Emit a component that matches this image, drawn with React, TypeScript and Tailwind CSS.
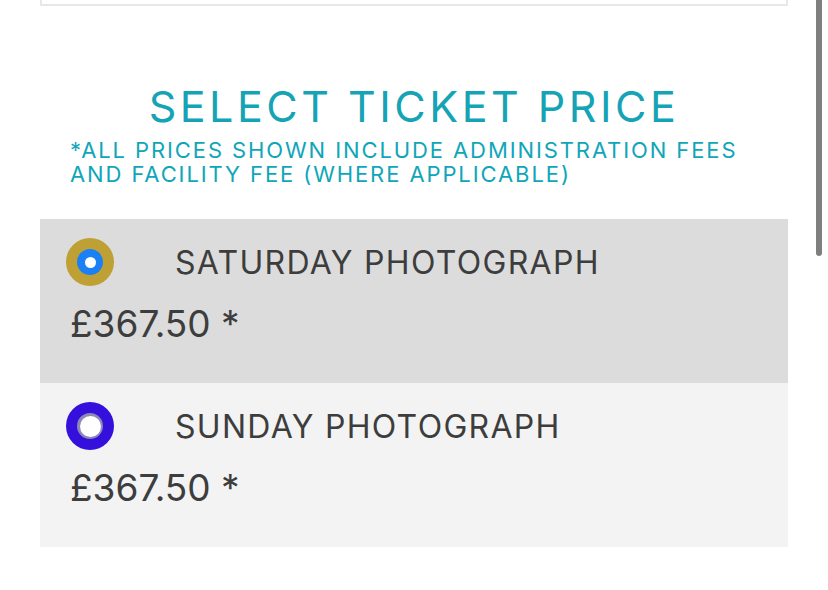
import React from 'react';

const tickets = [
  { name: 'SATURDAY PHOTOGRAPH', price: '£367.50 *', selected: true },
  { name: 'SUNDAY PHOTOGRAPH', price: '£367.50 *', selected: false },
];

const Radio: React.FC<{ selected: boolean }> = ({ selected }) =>
  selected ? (
    <div className="w-[48px] h-[48px] rounded-full bg-[#bfa034] flex items-center justify-center shrink-0">
      <div className="w-[26px] h-[26px] rounded-full bg-[#1a80f5] flex items-center justify-center">
        <div className="w-[11px] h-[11px] rounded-full bg-white" />
      </div>
    </div>
  ) : (
    <div className="w-[48px] h-[48px] rounded-full bg-[#3510dc] flex items-center justify-center shrink-0">
      <div className="w-[26px] h-[26px] rounded-full bg-[#8d88b4] flex items-center justify-center">
        <div className="w-[21px] h-[21px] rounded-full bg-white" />
      </div>
    </div>
  );

export default function App() {
  return (
    <div className="relative w-[828px] h-[590px] overflow-hidden bg-white text-[#3d3d3d]" style={{ fontFamily: 'Inter, "Open Sans", sans-serif' }}>
      <div className="mx-[40px] w-[748px]">
        {/* bottom edge of the box above */}
        <div className="h-[6px] border-x-2 border-b-2 border-[#e8e8e8]" />

        <h1 className="mt-[75px] text-center text-[43px] leading-[50px] text-[#15a3b6] tracking-[3.5px]">
          SELECT TICKET PRICE
        </h1>
        <p className="mt-[7px] px-[30px] text-[22px] leading-[24px] text-[#10a6b9] tracking-[1.9px]">
          *ALL PRICES SHOWN INCLUDE ADMINISTRATION FEES AND FACILITY FEE (WHERE APPLICABLE)
        </p>

        <div className="mt-[33px]">
          {tickets.map((t) => (
            <div
              key={t.name}
              className={`h-[164px] px-[26px] pt-[18px] ${t.selected ? 'bg-[#dcdcdc]' : 'bg-[#f3f3f3]'}`}
            >
              <div className="flex items-center gap-[61px]">
                <Radio selected={t.selected} />
                <span className="pt-[2px] text-[32px] tracking-[1.3px]">{t.name}</span>
              </div>
              <div className="mt-[15px] pl-[4px] text-[37px] leading-[44px]">{t.price}</div>
            </div>
          ))}
        </div>
      </div>

      {/* scrollbar */}
      <div className="absolute left-[816px] top-0 w-[6px] h-[256px] rounded-b-full bg-[#7f7f7f]" />
    </div>
  );
}
